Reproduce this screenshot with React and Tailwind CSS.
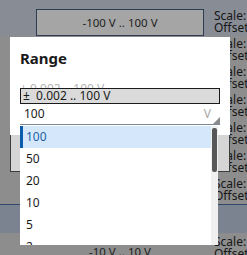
import React from "react";

function ScaleCol() {
  return (
    <div className="w-[33px] overflow-hidden whitespace-nowrap text-[12px] leading-[12px] text-[#161616]">
      Scale:
      <br />
      Offset
    </div>
  );
}

function Row({ className = "" }) {
  return (
    <div className={"flex h-[28px] items-center " + className}>
      <div className="w-[214px]" />
      <ScaleCol />
    </div>
  );
}

const items = ["100", "50", "20", "10", "5", "2"];

export default function App() {
  return (
    <div className="relative w-[247px] h-[255px] overflow-hidden bg-[#8d8d8d] font-['Noto_Sans',sans-serif] text-[#1a1a1a]">
      {/* top row */}
      <div className="flex h-[36px] items-end bg-[#888c95]">
        <div className="w-[36px]" />
        <div className="w-[168px] h-[27px] border border-[#2f3d52] bg-[#a5a5a5] flex items-center justify-center text-[11.5px] text-[#1e1e1e]">
          -100 V .. 100 V
        </div>
        <div className="ml-[10px] pb-[2px]">
          <ScaleCol />
        </div>
      </div>
      <Row />
      <Row />
      <Row />
      <Row />
      <Row />
      <Row />
      <div className="h-[1px] bg-[#33496b]" />
      <div className="h-[28px] bg-[#7b8391]" />
      <div className="flex h-[28px] pt-[3px]">
        <div className="w-[36px]" />
        <div className="w-[168px] flex justify-center pt-[9px] text-[11.5px] leading-[14px] text-[#1e1e1e]">
          -10 V .. 10 V
        </div>
        <div className="ml-[10px]">
          <ScaleCol />
        </div>
      </div>

      {/* dialog */}
      <div className="absolute left-[10px] top-[37px] w-[220px] h-[135px] bg-white flex flex-col">
        <div className="pt-[12px] pl-[10px] text-[15px] font-bold leading-[18px] text-[#1a1a1a]">Range</div>
        <div className="mt-[15px] h-[6px] overflow-hidden pl-[10px] text-[12px] leading-[14px] text-[#b4b4b4] whitespace-pre">
          ± 0.002 .. 100 V
        </div>
        <div className="mx-[10px] h-[16px] border border-[#1b1b1b] bg-[#dadada] flex items-center pl-[2px] text-[12px] leading-[14px] whitespace-pre text-[#1a1a1a]">
          ±  0.002 .. 100 V
        </div>
        <div className="relative mx-[10px] h-[21px] border-b border-[#7b8794] flex items-center text-[12px]">
          <span className="pl-[4px] text-[#1a1a1a]">100</span>
          <span className="ml-auto pr-[9px] text-[#a8a8a8] text-[12px]">V</span>
          <svg className="absolute right-0 bottom-0" width="7" height="7" viewBox="0 0 7 7">
            <polygon points="7,0 7,7 0,7" fill="#8a8a8a" />
          </svg>
        </div>
        <div className="mt-auto h-[37px] bg-[#d5d5d5] border-x border-b border-[#3c3c3c]" />
      </div>

      {/* dropdown list */}
      <div className="absolute left-[20px] top-[126px] w-[198px] h-[119px] bg-white overflow-hidden">
        {items.map((it, i) =>
          i === 0 ? (
            <div
              key={it}
              className="h-[22px] flex items-center border-l-[3px] border-[#0b5cad] bg-[#d5e8fb] pl-[3px] text-[12px] text-[#1f5ea6] mr-[7px]"
            >
              {it}
            </div>
          ) : (
            <div key={it} className="h-[22px] flex items-center pl-[6px] text-[12px] text-[#1a1a1a]">
              {it}
            </div>
          )
        )}
        <div className="absolute right-0 top-0 bottom-0 w-[7px] bg-[#f0f0f0]">
          <div className="ml-[1px] mt-[2px] w-[5px] h-[44px] rounded-[2px] bg-[#575757]" />
        </div>
      </div>
    </div>
  );
}
